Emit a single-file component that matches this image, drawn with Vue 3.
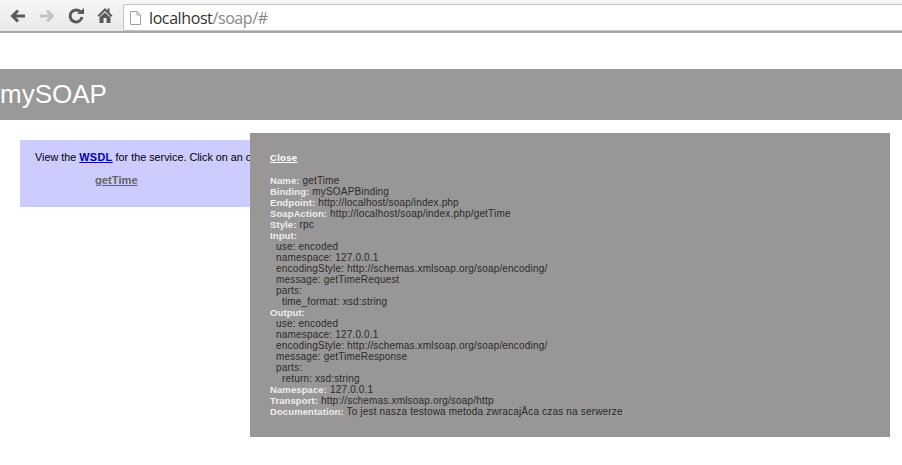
<script setup>
const inputRows = [
  { k: 'use', v: 'encoded', d: 1 },
  { k: 'namespace', v: '127.0.0.1', d: 1 },
  { k: 'encodingStyle', v: 'http://schemas.xmlsoap.org/soap/encoding/', d: 1 },
  { k: 'message', v: 'getTimeRequest', d: 1 },
  { k: 'parts', v: '', d: 1 },
  { k: 'time_format', v: 'xsd:string', d: 2 },
]
const outputRows = [
  { k: 'use', v: 'encoded', d: 1 },
  { k: 'namespace', v: '127.0.0.1', d: 1 },
  { k: 'encodingStyle', v: 'http://schemas.xmlsoap.org/soap/encoding/', d: 1 },
  { k: 'message', v: 'getTimeResponse', d: 1 },
  { k: 'parts', v: '', d: 1 },
  { k: 'return', v: 'xsd:string', d: 2 },
]
const head = [
  ['Name', 'getTime'],
  ['Binding', 'mySOAPBinding'],
  ['Endpoint', 'http://localhost/soap/index.php'],
  ['SoapAction', 'http://localhost/soap/index.php/getTime'],
  ['Style', 'rpc'],
]
const tail = [
  ['Namespace', '127.0.0.1'],
  ['Transport', 'http://schemas.xmlsoap.org/soap/http'],
  ['Documentation', 'To jest nasza testowa metoda zwracajÄca czas na serwerze'],
]
</script>

<template>
  <div class="window">
    <div class="toolbar">
      <div class="navs">
        <svg width="18" height="16" viewBox="0 0 18 16"><path d="M16 8H5M9 2.500 3.500 8 9 13.500" fill="none" stroke="#5a5a5a" stroke-width="3"/></svg>
        <svg width="18" height="16" viewBox="0 0 18 16"><path d="M2 8h11M9 2.500 14.500 8 9 13.500" fill="none" stroke="#c4c4c4" stroke-width="3"/></svg>
        <svg width="18" height="18" viewBox="0 0 18 18"><path d="M14 5.500A6 6 0 1 0 15 10" fill="none" stroke="#5a5a5a" stroke-width="3"/><path d="M10 7h7V1z" fill="#5a5a5a"/></svg>
        <svg class="home" width="16" height="17" viewBox="0 0 16 17"><path d="M8 1 0.500 8.500 2 10l6-6 6 6 1.500-1.500-3-3V1.500h-2v2z" fill="#5a5a5a"/><path d="M2.500 10.500 8 5.500l5.500 5V16H9.500v-5h-3v5h-4z" fill="#5a5a5a"/></svg>
      </div>
      <div class="omnibox">
        <svg width="11" height="14" viewBox="0 0 11 14"><path d="M.5.500h6.500l3.500 3.500v9.500H.5zM7 .5V4h3.500" fill="#fff" stroke="#a0a0a0"/></svg>
        <span class="url"><span class="host">localhost</span>/soap/#</span>
      </div>
    </div>

    <main class="page">
      <h1 class="banner">mySOAP</h1>
      <div class="panel">
        <p class="intro">View the <a class="wsdl">WSDL</a> for the service. Click on an operation name to view its details.</p>
        <a class="op">getTime</a>
      </div>

      <section class="popup">
        <a class="close">Close</a>
        <div class="details">
          <div v-for="r in head" :key="r[0]"><b>{{ r[0] }}:</b> {{ r[1] }}</div>
          <div><b>Input:</b></div>
          <div v-for="r in inputRows" :key="'i' + r.k" :class="'d' + r.d">{{ r.k }}: {{ r.v }}</div>
          <div><b>Output:</b></div>
          <div v-for="r in outputRows" :key="'o' + r.k" :class="'d' + r.d">{{ r.k }}: {{ r.v }}</div>
          <div v-for="r in tail" :key="r[0]"><b>{{ r[0] }}:</b> {{ r[1] }}</div>
        </div>
      </section>
    </main>
  </div>
</template>

<style>
html, body { margin: 0; background: #fff; }
</style>

<style scoped>
.window { width: 902px; height: 465px; overflow: hidden; background: #fff; font-family: "Liberation Sans", Arial, sans-serif; }
.toolbar { height: 31px; display: flex; align-items: center; padding-left: 9px; gap: 11px; background: linear-gradient(#f6f6f6, #e9e9e9); border-bottom: 2px solid #a8a8a8; }
.navs { display: flex; align-items: center; gap: 11px; }
.home { margin-left: 1px; margin-right: -1px; }
.omnibox { flex: 1; align-self: flex-start; margin-top: 4px; height: 27px; display: flex; align-items: center; gap: 8px; padding-left: 6px; background: #fff; border: 1px solid #c4c4c4; border-right: 0; border-radius: 2px 0 0 2px; box-sizing: border-box; }
.url { font-size: 16px; color: #888; font-family: "Open Sans", "Liberation Sans", sans-serif; letter-spacing: -0.4px; }
.host { color: #333; }
.page { position: relative; height: 432px; }
.banner { margin: 0; position: relative; top: 36px; height: 51px; line-height: 51px; font-size: 26px; font-weight: 400; color: #fff; background: #999; }
.panel { margin: 56px 0 0 20px; width: 640px; height: 67px; box-sizing: border-box; padding: 10px 15px; background: #ccf; font-size: 10.800px; }
.intro { margin: 0; color: #000; line-height: 14px; white-space: nowrap; }
.wsdl { color: #00a; font-weight: 700; text-decoration: underline; letter-spacing: .4px; }
.op { display: block; margin: 10px 0 0 60px; color: #666; font-weight: 700; font-size: 11.200px; text-decoration: underline; }
.popup { position: absolute; left: 250px; top: 100px; width: 640px; height: 304px; box-sizing: border-box; padding: 19px 20px; background: #989696; font-size: 10px; letter-spacing: .18px; line-height: 11px; color: #2b2b2b; }
.close { display: block; color: #fff; font-weight: 700; text-decoration: underline; margin-bottom: 12px; font-size: 9.500px; letter-spacing: .3px; }
.details b { color: #eee; font-weight: 700; font-size: 9.500px; letter-spacing: .1px; }
.d1 { padding-left: 6px; }
.d2 { padding-left: 12px; }
</style>
